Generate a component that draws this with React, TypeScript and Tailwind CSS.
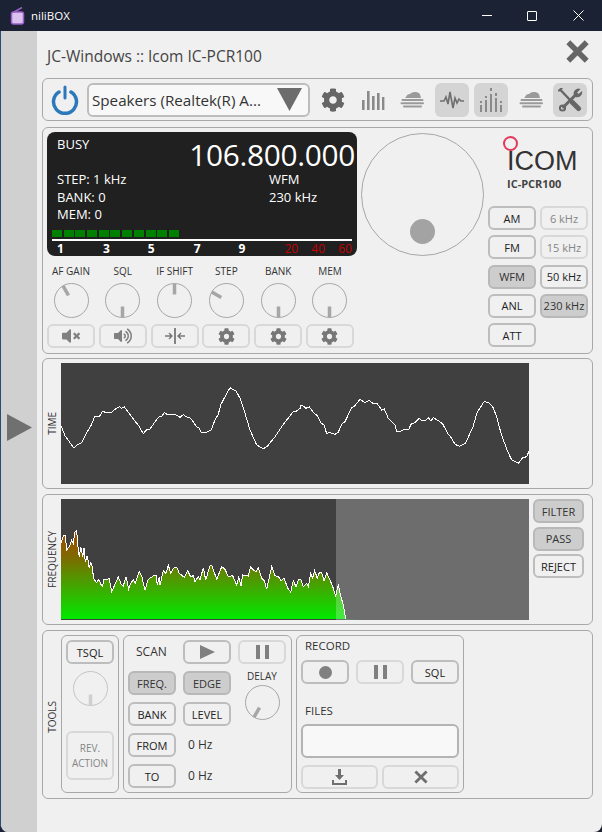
import type { ReactNode } from "react"
import { FaCog, FaVolumeMute, FaVolumeUp } from "react-icons/fa"

const uiFont = "font-['Open_Sans',sans-serif]"

// traced from the reference, in 3x zoom coordinates
const timeLeft = [183,212,195,242,208,260,222,280,228,272,245,263,262,230,275,208,283,186,298,185,307,170,320,172,335,172,345,163,358,155,365,160,373,156,385,172,395,185,405,198,418,215,430,236,440,224,450,222,462,205,475,187,485,184,493,173,505,180,527,179,540,187,550,179,560,186,568,187,580,200,590,216,597,218,603,232,618,232,633,226,645,195,655,178,662,150,675,125,690,98,697,103,708,107,720,130,735,175,750,225,770,270,790,281,802,274,825,245,845,215,860,195,880,170,890,168,900,160]
const timeRight = [0,152,8,152,18,160,28,155,40,172,52,182,62,203,72,210,80,236,88,232,105,238,115,232,125,207,135,200,155,158,162,155,180,133,195,143,208,136,220,146,232,146,245,165,253,162,265,190,285,210,290,228,302,228,315,223,328,222,332,208,345,203,358,190,365,197,378,195,385,188,393,198,400,188,415,197,428,207,445,238,455,250,465,268,478,274,497,264,510,235,520,213,532,170,540,160,552,140,565,142,578,155,590,185,603,235,622,287,635,315,655,325,668,308,680,305,687,288]
const freqTrace = [63,158,70,137,76,137,80,180,88,170,95,150,100,160,105,125,110,122,113,165,118,200,122,170,128,200,132,175,136,215,142,197,148,235,152,215,158,235,160,265,170,278,176,268,182,282,188,288,192,268,200,270,207,265,215,305,225,283,235,260,243,282,250,288,258,260,266,298,272,280,280,270,286,280,298,245,306,262,315,300,325,268,340,258,348,256,352,285,358,262,360,285,370,242,378,250,385,225,392,250,400,235,410,232,418,250,433,262,443,243,452,260,460,257,465,275,475,260,480,270,490,233,497,270,510,227,516,228,530,268,545,230,555,238,565,260,578,257,590,285,596,262,603,287,608,255,625,258,632,230,640,240,648,245,655,234,665,265,673,272,680,298,695,230,705,257,718,262,723,272,732,265,745,298,752,306,760,272,768,290,775,270,782,267,790,290,800,280,805,290,812,250,818,265,824,242,832,265,838,248,845,248,852,272,860,248,870,270,880,295,887,320,895,283,900,310,910,345,917,388]

function toPoints(raw: number[], map: (x: number, y: number) => [number, number]) {
  const out: string[] = []
  for (let i = 0; i < raw.length; i += 2) {
    const [x, y] = map(raw[i], raw[i + 1])
    out.push(`${x.toFixed(1)},${y.toFixed(1)}`)
  }
  return out.join(" ")
}

const timeLine =
  toPoints(timeLeft, (x, y) => [x / 3 - 61, 355 + y / 3 - 363]) +
  " " +
  toPoints(timeRight, (x, y) => [300 + x / 3 - 61, 355 + y / 3 - 363])
const freqLine = toPoints(freqTrace, (x, y) => [40 + x / 3 - 61, 490 + y / 3 - 499])

function Btn({
  children,
  className = "w-12",
  active,
  disabled,
}: {
  children: ReactNode
  className?: string
  active?: boolean
  disabled?: boolean
}) {
  return (
    <div
      className={`h-6 shrink-0 flex items-center justify-center rounded-md border-2 text-[11px] leading-none whitespace-nowrap ${className} ${
        active
          ? "bg-[#cdcdcd] border-[#b8b8b8] text-[#333]"
          : disabled
            ? "border-[#d8d8d8] text-[#858585]"
            : "border-[#bdbdbd] text-[#222]"
      }`}
    >
      {children}
    </div>
  )
}

function Knob({ angle, light, size = 35 }: { angle: number; light?: boolean; size?: number }) {
  const color = light ? "#cfcfcf" : "#a6a6a6"
  return (
    <svg width={size} height={size} viewBox="0 0 35 35" className="shrink-0">
      <circle cx="17.5" cy="17.5" r="17" fill="none" stroke={light ? "#c4c4c4" : "#a6a6a6"} />
      <line x1="17.5" y1="0.5" x2="17.5" y2="11.5" stroke={color} strokeWidth="3.5" transform={`rotate(${angle} 17.5 17.5)`} />
    </svg>
  )
}

function KnobCol({ label, angle }: { label: string; angle: number }) {
  return (
    <div className="w-[50px] flex flex-col items-center">
      <div className="h-[13px] text-[10px] leading-[13px] text-[#333] whitespace-nowrap">{label}</div>
      <div className="mt-[5px]">
        <Knob angle={angle} />
      </div>
    </div>
  )
}

function SideLabel({ children }: { children: ReactNode }) {
  return (
    <div className="w-[18px] shrink-0 flex items-center justify-center">
      <span className="[writing-mode:vertical-rl] rotate-180 text-[10px] leading-none text-[#333]">{children}</span>
    </div>
  )
}

function BarsIcon() {
  return (
    <svg width="24" height="24" viewBox="0 0 24 24" fill="#8a8a8a">
      <rect x="1" y="12" width="2.6" height="10" />
      <rect x="6" y="3" width="2.6" height="19" />
      <rect x="11" y="8" width="2.6" height="14" />
      <rect x="16" y="5" width="2.6" height="17" />
      <rect x="21" y="9" width="2.4" height="13" />
    </svg>
  )
}

function StackIcon() {
  return (
    <svg width="24" height="18" viewBox="0 0 24 18" fill="#9a9a9a">
      <path d="M6 6 Q7 3 10 3 Q12 0.5 16 1 Q20 1.5 20.5 5 L21 7 H5 Z" />
      <rect x="1.5" y="8" width="22" height="2" rx="1" />
      <rect x="0.5" y="11.3" width="23.5" height="2" rx="1" />
      <rect x="3" y="14.6" width="19" height="2" rx="1" />
    </svg>
  )
}

function WaveIcon() {
  return (
    <svg width="24" height="20" viewBox="0 0 24 20" fill="none" stroke="#6f6f6f" strokeWidth="1.6">
      <polyline points="0,11 4,11 6,7 8,14 10,2 13,18 15,8 17,13 19,9 21,11 24,11" />
    </svg>
  )
}

function SpectrumIcon() {
  return (
    <svg width="24" height="26" viewBox="0 0 24 26" fill="#8a8a8a">
      <rect x="1" y="18" width="2" height="7" />
      <rect x="1" y="14" width="2" height="2" />
      <rect x="6" y="13" width="2" height="12" />
      <rect x="6" y="9" width="2" height="2" />
      <rect x="11" y="7" width="2" height="18" />
      <rect x="11" y="1" width="2" height="3" />
      <rect x="16" y="11" width="2" height="14" />
      <rect x="16" y="6" width="2" height="3" />
      <rect x="21" y="18" width="2" height="7" />
      <rect x="21" y="14" width="2" height="2" />
    </svg>
  )
}

function ToolsIcon() {
  return (
    <svg width="25" height="24" viewBox="0 0 25 24" fill="none" stroke="#666" strokeLinecap="round">
      {/* screwdriver */}
      <path d="M1 2.5 L3.5 0.5" strokeWidth="2.2" />
      <path d="M3 2.5 L13 13" strokeWidth="2.4" />
      <path d="M14.5 14.5 L20.5 20.5" strokeWidth="5" />
      {/* wrench */}
      <path d="M17.5 7 L5.5 19" strokeWidth="3" />
      <path d="M16 7.5 A5 5 0 0 1 22.5 1 L19.2 4.4 L20.5 6 L24 3 A5 5 0 0 1 17.5 9 Z" fill="#666" stroke="none" />
      <circle cx="4.5" cy="20" r="2.6" strokeWidth="2" />
    </svg>
  )
}

function ShiftIcon() {
  return (
    <svg width="24" height="16" viewBox="0 0 24 16" fill="none" stroke="#777" strokeWidth="1.4">
      <line x1="12" y1="0" x2="12" y2="16" strokeWidth="1.8" />
      <path d="M2 8 H9 M6 5 L9 8 L6 11" />
      <path d="M22 8 H15 M18 5 L15 8 L18 11" />
    </svg>
  )
}

function PlayIcon() {
  return (
    <svg width="15" height="14" viewBox="0 0 15 14">
      <path d="M0 0 L15 7 L0 14 Z" fill="#808080" />
    </svg>
  )
}

function PauseIcon() {
  return (
    <svg width="13" height="14" viewBox="0 0 13 14" fill="#808080">
      <rect x="0" y="0" width="4" height="14" />
      <rect x="9" y="0" width="4" height="14" />
    </svg>
  )
}

function CrossIcon({ size, width, color }: { size: number; width: number; color: string }) {
  return (
    <svg width={size} height={size} viewBox="0 0 20 20" stroke={color} strokeWidth={width}>
      <path d="M2 2 L18 18 M18 2 L2 18" />
    </svg>
  )
}

function ToolbarBtn({ children, active }: { children: ReactNode; active?: boolean }) {
  return (
    <div className={`w-[34px] h-[34px] shrink-0 flex items-center justify-center rounded-md ${active ? "bg-[#d4d4d4]" : ""}`}>
      {children}
    </div>
  )
}

export default function App() {
  return (
    <div className={`w-[602px] h-[832px] bg-[#1a2233] flex flex-col overflow-hidden text-[#333] ${uiFont}`}>
      {/* title bar */}
      <div className="h-[31px] shrink-0 flex items-center text-white">
        <svg width="16" height="18" viewBox="0 0 16 18" className="ml-[10px]">
          <rect x="1.5" y="5" width="12" height="12" rx="2" fill="#d9c3ee" stroke="#9a5fc9" strokeWidth="1.5" />
          <line x1="4" y1="5" x2="12" y2="0.5" stroke="#9a5fc9" strokeWidth="1.5" />
        </svg>
        <span className="ml-[5px] text-[11.5px]">niliBOX</span>
        <div className="ml-auto flex items-center">
          <div className="w-[45px] flex justify-center">
            <div className="w-[10px] h-px bg-white" />
          </div>
          <div className="w-[45px] flex justify-center">
            <div className="w-[10px] h-[10px] border border-white rounded-[1px]" />
          </div>
          <div className="w-[48px] flex justify-center">
            <svg width="11" height="11" viewBox="0 0 11 11" stroke="white" strokeWidth="1">
              <path d="M0.5 0.5 L10.5 10.5 M10.5 0.5 L0.5 10.5" />
            </svg>
          </div>
        </div>
      </div>

      <div className="flex-1 flex min-h-0 bg-[#f0f0f0] border-l border-[#2a4a7a] rounded-b-lg overflow-hidden">
        {/* left strip */}
        <div className="w-[36px] shrink-0 bg-[#d0d0d0] pt-[383px] pl-[6px]">
          <svg width="25" height="27" viewBox="0 0 25 27">
            <path d="M0 0 L25 13.5 L0 27 Z" fill="#707070" />
          </svg>
        </div>

        <div className="w-[551px] ml-[5px] flex flex-col">
          {/* header */}
          <div className="h-[47px] shrink-0 flex items-center pl-[5px] pr-[4px] pt-[4px]">
            <span className="text-[15.5px] text-[#444]">JC-Windows :: Icom IC-PCR100</span>
            <div className="ml-auto mb-[10px]">
              <CrossIcon size={23} width={4.8} color="#666" />
            </div>
          </div>

          {/* toolbar */}
          <div className="h-[43px] shrink-0 border border-[#a8a8a8] rounded-md flex items-center pl-[8px]">
            <svg width="28" height="30" viewBox="0 0 28 30" fill="none" stroke="#2b78bb" strokeLinecap="round" className="shrink-0">
              <path d="M8 7 A11.5 11.5 0 1 0 20 7" strokeWidth="3.5" />
              <line x1="14" y1="2" x2="14" y2="13" strokeWidth="3" />
            </svg>
            <div className="ml-[8px] w-[223px] h-[34px] shrink-0 border-2 border-[#bdbdbd] rounded-md bg-[#f8f8f8] flex items-center pl-[3px] pr-[6px] text-[15.2px] text-[#333]">
              <span className="whitespace-nowrap pt-px">Speakers (Realtek(R) A...</span>
              <svg width="25" height="23" viewBox="0 0 25 23" className="ml-auto">
                <path d="M0 0 H25 L12.5 23 Z" fill="#6c6c6c" />
              </svg>
            </div>
            <div className="ml-[6px] flex items-center gap-[5.5px]">
              <ToolbarBtn>
                <FaCog className="text-[#666]" size={24} />
              </ToolbarBtn>
              <ToolbarBtn>
                <BarsIcon />
              </ToolbarBtn>
              <ToolbarBtn>
                <StackIcon />
              </ToolbarBtn>
              <ToolbarBtn active>
                <WaveIcon />
              </ToolbarBtn>
              <ToolbarBtn active>
                <SpectrumIcon />
              </ToolbarBtn>
              <ToolbarBtn>
                <StackIcon />
              </ToolbarBtn>
              <ToolbarBtn active>
                <ToolsIcon />
              </ToolbarBtn>
            </div>
          </div>

          {/* radio panel */}
          <div className="mt-[6px] h-[227px] shrink-0 border border-[#a8a8a8] rounded-md flex pt-[4px] pl-[4px]">
            <div className="w-[310px] shrink-0 flex flex-col">
              <div className="h-[124px] shrink-0 bg-[#202020] rounded-lg text-white flex flex-col pl-[5px] pr-[5px] text-[13px]">
                <div className="flex items-start h-[40px]">
                  <span className="ml-[5px] mt-[3px] leading-[18px]">BUSY</span>
                  <span className="ml-auto mr-[-3px] text-[29.8px] leading-[32px] mt-[7px] tracking-[-0.3px]">106.800.000</span>
                </div>
                <div className="flex pl-[5px] mt-[-1px] leading-[17.5px]">
                  <div className="w-[212px]">
                    <div>STEP: 1 kHz</div>
                    <div>BANK: 0</div>
                    <div>MEM: 0</div>
                  </div>
                  <div>
                    <div>WFM</div>
                    <div>230 kHz</div>
                  </div>
                </div>
                <div className="mt-[6.5px] flex gap-[1.7px]">
                  {Array.from({ length: 11 }).map((_, i) => (
                    <div key={i} className="w-[10px] h-[7px] bg-[#008000]" />
                  ))}
                </div>
                <div className="mt-[2px] h-[2px] bg-white" />
                <div className="h-[14px] text-[12px] leading-[16px] font-bold">
                  <div className="flex">
                    <span className="w-[46px] pl-[5px]">1</span>
                    <span className="w-[45px] pl-[5px]">3</span>
                    <span className="w-[46px] pl-[5px]">5</span>
                    <span className="w-[45px] pl-[5px]">7</span>
                    <span className="w-[46px] pl-[5px]">9</span>
                    <span className="w-[27px] pl-[5px] text-[#c00000] font-normal">20</span>
                    <span className="w-[27px] pl-[5px] text-[#c00000] font-normal">40</span>
                    <span className="pl-[5px] text-[#c00000] font-normal">60</span>
                  </div>
                </div>
              </div>
              <div className="mt-[9px] w-[310px] flex justify-between pr-[1px] ml-[-1px]">
                <KnobCol label="AF GAIN" angle={-30} />
                <KnobCol label="SQL" angle={180} />
                <KnobCol label="IF SHIFT" angle={0} />
                <KnobCol label="STEP" angle={-60} />
                <KnobCol label="BANK" angle={180} />
                <KnobCol label="MEM" angle={180} />
              </div>
              <div className="mt-[6px] w-[307px] flex justify-between">
                <Btn disabled>
                  <FaVolumeMute className="text-[#808080]" size={18} />
                </Btn>
                <Btn disabled>
                  <FaVolumeUp className="text-[#808080]" size={18} />
                </Btn>
                <Btn disabled>
                  <ShiftIcon />
                </Btn>
                <Btn disabled>
                  <FaCog className="text-[#777]" size={17} />
                </Btn>
                <Btn disabled>
                  <FaCog className="text-[#777]" size={17} />
                </Btn>
                <Btn disabled>
                  <FaCog className="text-[#777]" size={17} />
                </Btn>
              </div>
            </div>

            {/* tuning dial */}
            <div className="ml-[4px] w-[123px] h-[123px] shrink-0 rounded-full border border-[#a6a6a6] flex justify-center items-end pb-[11px] mt-[1px]">
              <div className="w-[25px] h-[25px] rounded-full bg-[#a3a3a3]" />
            </div>

            {/* logo and mode buttons */}
            <div className="ml-[4px] w-[100px] shrink-0 flex flex-col">
              <div className="h-[74px] shrink-0 flex flex-col items-start pl-[19px]">
                <div className="relative h-[43px] w-[72px] flex items-end">
                  <span className="absolute left-[-4px] top-[4px] w-[15px] h-[15px] rounded-full border-2 border-[#e5365b]" />
                  <span className="font-['Liberation_Sans',sans-serif] text-[27px] leading-[27px] text-[#333] whitespace-nowrap">ICOM</span>
                </div>
                <span className="mt-[2px] text-[11px] leading-[14px] font-bold text-[#444]">IC-PCR100</span>
              </div>
              <div className="grid grid-cols-2 gap-x-[4px] gap-y-[5.3px]">
                <Btn>AM</Btn>
                <Btn disabled>6 kHz</Btn>
                <Btn>FM</Btn>
                <Btn disabled>15 kHz</Btn>
                <Btn active>WFM</Btn>
                <Btn>50 kHz</Btn>
                <Btn>ANL</Btn>
                <Btn active>230 kHz</Btn>
                <Btn>ATT</Btn>
              </div>
            </div>
          </div>

          {/* time scope */}
          <div className="mt-[4px] h-[131px] shrink-0 border border-[#a8a8a8] rounded-md flex py-[4px]">
            <SideLabel>TIME</SideLabel>
            <svg width="468" height="121" viewBox="0 0 468 121" className="bg-[#404040] shrink-0">
              <polyline points={timeLine} fill="none" stroke="white" strokeWidth="1" shapeRendering="crispEdges" />
            </svg>
          </div>

          {/* frequency scope */}
          <div className="mt-[5px] h-[131px] shrink-0 border border-[#a8a8a8] rounded-md flex py-[4px]">
            <SideLabel>FREQUENCY</SideLabel>
            <svg width="468" height="121" viewBox="0 0 468 121" className="bg-[#404040] shrink-0">
              <defs>
                <linearGradient id="specFill" x1="0" y1="0" x2="0" y2="1">
                  <stop offset="0" stopColor="#a54800" />
                  <stop offset="0.3" stopColor="#7d6a00" />
                  <stop offset="1" stopColor="#00ea00" />
                </linearGradient>
              </defs>
              <polygon points={`0,120 ${freqLine} 300,120`} fill="url(#specFill)" />
              <polyline points={freqLine} fill="none" stroke="white" strokeWidth="1" shapeRendering="crispEdges" />
              <rect x="275" y="0" width="193" height="121" fill="white" fillOpacity="0.24" />
            </svg>
            <div className="ml-[4px] flex flex-col gap-[3.5px]">
              <Btn active className="w-[51px]">FILTER</Btn>
              <Btn active className="w-[51px]">PASS</Btn>
              <Btn className="w-[51px]">REJECT</Btn>
            </div>
          </div>

          {/* tools */}
          <div className="mt-[5px] h-[169px] shrink-0 border border-[#a8a8a8] rounded-md flex pt-[4px]">
            <SideLabel>TOOLS</SideLabel>

            <div className="w-[58px] h-[158px] shrink-0 border border-[#a8a8a8] rounded-md flex flex-col items-center pt-[4px]">
              <Btn>TSQL</Btn>
              <div className="mt-[7px]">
                <Knob angle={180} light />
              </div>
              <div className="mt-[25px] w-12 h-[49px] rounded-md border-2 border-[#d8d8d8] flex flex-col items-center justify-center text-[10px] leading-[15px] text-[#858585]">
                <span>REV.</span>
                <span>ACTION</span>
              </div>
            </div>

            <div className="ml-[4px] w-[169px] h-[158px] shrink-0 border border-[#a8a8a8] rounded-md flex pt-[4px] pl-[4px]">
              <div className="w-[103px] shrink-0 flex flex-col gap-[7px]">
                <div className="flex items-center">
                  <span className="w-[55px] pl-[8px] text-[12px]">SCAN</span>
                  <Btn>
                    <PlayIcon />
                  </Btn>
                </div>
                <div className="flex gap-[7px]">
                  <Btn active>FREQ.</Btn>
                  <Btn active>EDGE</Btn>
                </div>
                <div className="flex gap-[7px]">
                  <Btn>BANK</Btn>
                  <Btn>LEVEL</Btn>
                </div>
                <div className="flex items-center gap-[12px]">
                  <Btn>FROM</Btn>
                  <span className="text-[12px]">0 Hz</span>
                </div>
                <div className="flex items-center gap-[12px]">
                  <Btn>TO</Btn>
                  <span className="text-[12px]">0 Hz</span>
                </div>
              </div>
              <div className="ml-[7px] w-12 shrink-0 flex flex-col items-center">
                <Btn disabled>
                  <PauseIcon />
                </Btn>
                <span className="mt-[5px] text-[10px] leading-[14px] text-[#333]">DELAY</span>
                <div className="mt-[2px]">
                  <Knob angle={210} />
                </div>
              </div>
            </div>

            <div className="ml-[4px] w-[168px] h-[158px] shrink-0 border border-[#a8a8a8] rounded-md flex flex-col px-[4px]">
              <span className="pl-[4px] h-[20px] mb-[4px] text-[11.5px] leading-[20px]">RECORD</span>
              <div className="flex justify-between">
                <Btn>
                  <div className="w-[13px] h-[13px] rounded-full bg-[#808080]" />
                </Btn>
                <Btn disabled>
                  <PauseIcon />
                </Btn>
                <Btn>SQL</Btn>
              </div>
              <span className="pl-[4px] mt-[17px] h-[20px] text-[11.5px] leading-[20px]">FILES</span>
              <div className="mt-[3px] h-[34px] rounded-md border-2 border-[#b4b4b4] bg-[#f8f8f8]" />
              <div className="mt-[7px] flex justify-between">
                <Btn disabled className="w-[77px]">
                  <svg width="17" height="17" viewBox="0 0 17 17" fill="#6f6f6f">
                    <path d="M7 0 H10 V6 H13 L8.5 11 L4 6 H7 Z" />
                    <path d="M1 11 H3 V14 H14 V11 H16 V16 H1 Z" />
                  </svg>
                </Btn>
                <Btn disabled className="w-[77px]">
                  <CrossIcon size={14} width={4} color="#6f6f6f" />
                </Btn>
              </div>
            </div>
          </div>
        </div>
      </div>
    </div>
  )
}
